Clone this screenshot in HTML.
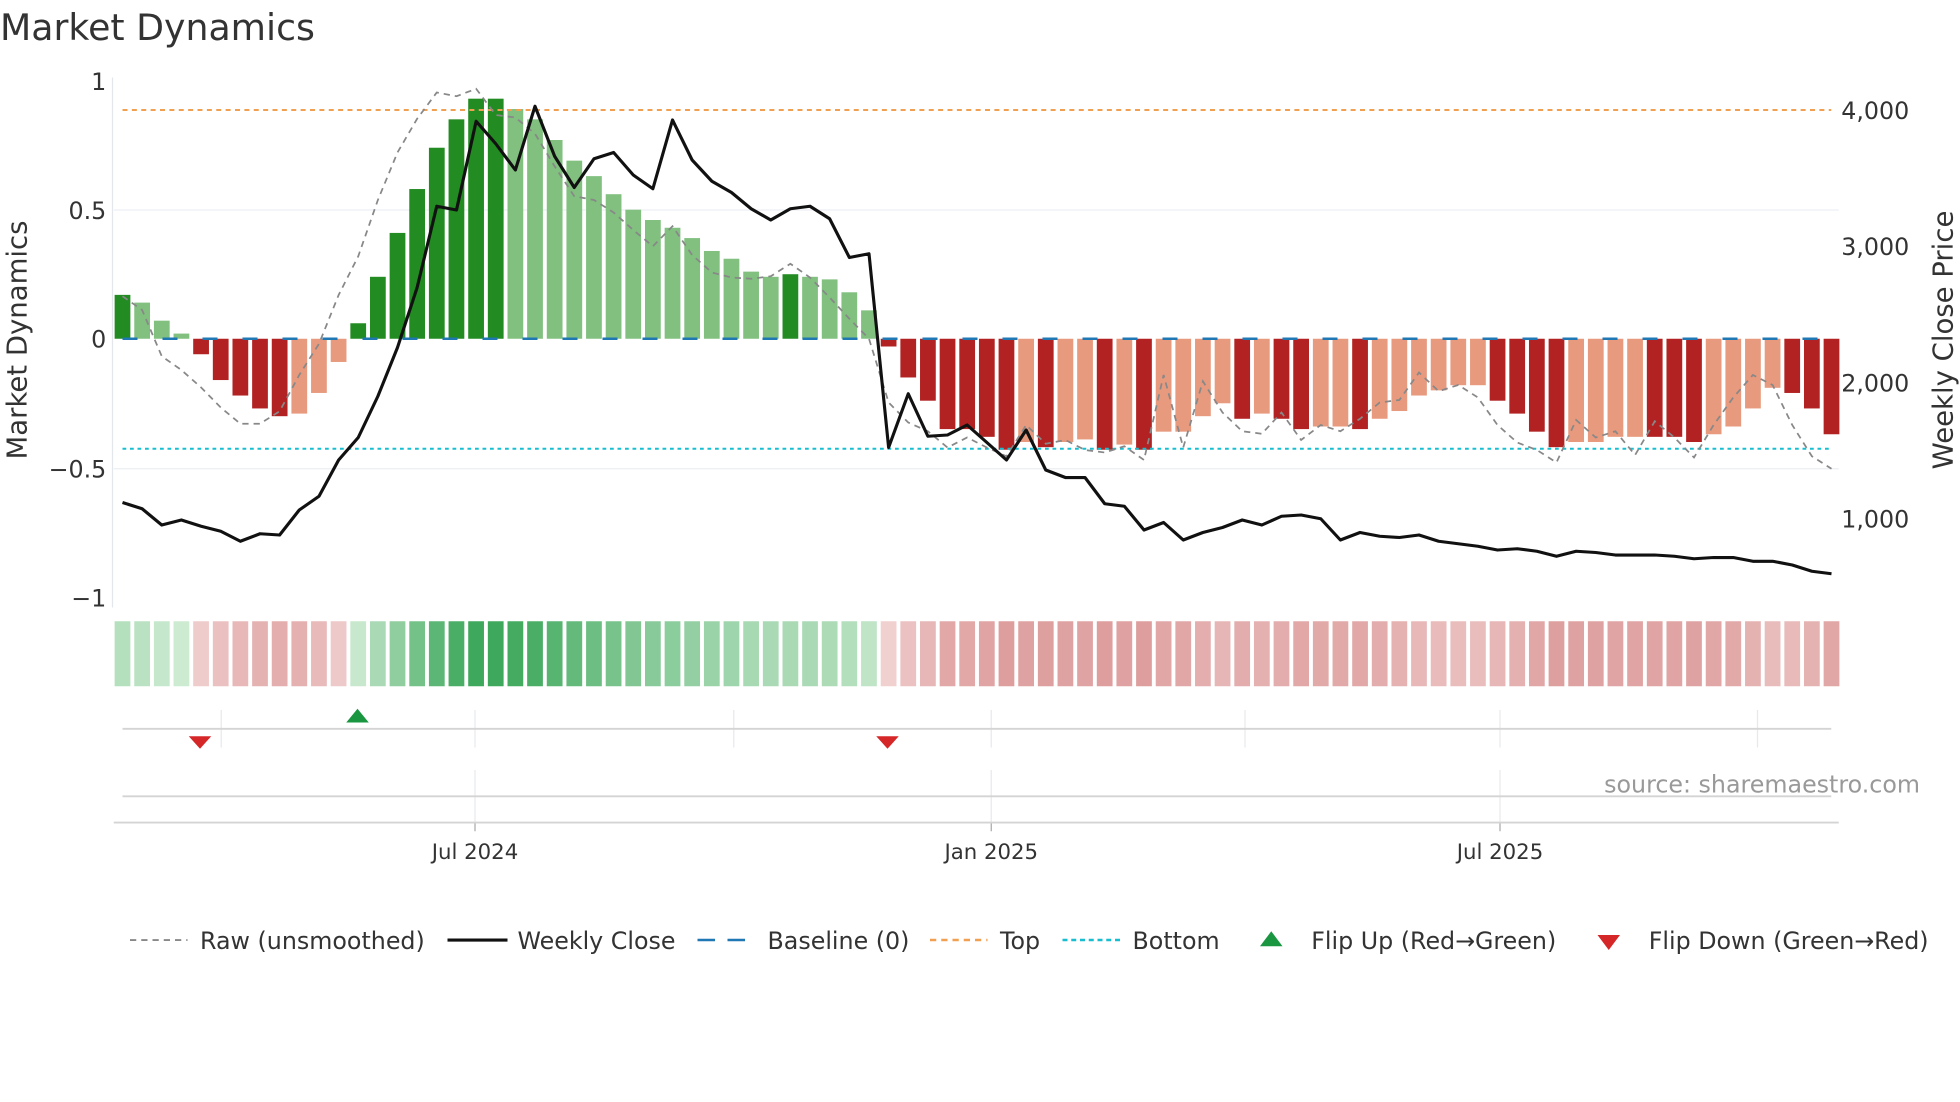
<!DOCTYPE html>
<html><head><meta charset="utf-8"><style>
html,body{margin:0;padding:0;background:#fff;}
svg{display:block;font-family:"DejaVu Sans","Liberation Sans",sans-serif;}
</style></head><body>
<svg id="s" width="1960" height="1102" viewBox="0 0 1568 881.6" xmlns="http://www.w3.org/2000/svg">
<rect width="1568" height="882" fill="#fff"/>
<text x="0" y="32" font-size="29" fill="#333">Market Dynamics</text>
<g id="grid"></g>
<g id="bars"></g>
<g id="lines"></g>
<g font-size="19" fill="#333">
<text x="85" y="72" text-anchor="end">1</text>
<text x="85" y="175" text-anchor="end">0.5</text>
<text x="85" y="278" text-anchor="end">0</text>
<text x="85" y="382" text-anchor="end">−0.5</text>
<text x="85" y="485" text-anchor="end">−1</text>
<text x="1473" y="95">4,000</text>
<text x="1473" y="204">3,000</text>
<text x="1473" y="313">2,000</text>
<text x="1473" y="422">1,000</text>
<text x="380" y="687" text-anchor="middle" font-size="17">Jul 2024</text>
<text x="793" y="687" text-anchor="middle" font-size="17">Jan 2025</text>
<text x="1200" y="687" text-anchor="middle" font-size="17">Jul 2025</text>
</g>
<text transform="translate(21,272) rotate(-90)" font-size="22" fill="#333" text-anchor="middle">Market Dynamics</text>
<text transform="translate(1562,272) rotate(-90)" font-size="22" fill="#333" text-anchor="middle">Weekly Close Price</text>
<text x="1536" y="634" text-anchor="end" font-size="19" fill="#999">source: sharemaestro.com</text>
<g font-size="19" fill="#333">
<line x1="104" y1="752" x2="150" y2="752" stroke="#888" stroke-width="1.5" stroke-dasharray="5,4"/>
<text x="160" y="759">Raw (unsmoothed)</text>
<line x1="358" y1="752" x2="406" y2="752" stroke="#111" stroke-width="2.5"/>
<text x="414" y="759">Weekly Close</text>
<line x1="558" y1="752" x2="604" y2="752" stroke="#1f77b4" stroke-width="2" stroke-dasharray="14,10"/>
<text x="614" y="759">Baseline (0)</text>
<line x1="744" y1="752" x2="790" y2="752" stroke="#f0a050" stroke-width="2" stroke-dasharray="5,4"/>
<text x="800" y="759">Top</text>
<line x1="850" y1="752" x2="896" y2="752" stroke="#17becf" stroke-width="2" stroke-dasharray="4,3"/>
<text x="906" y="759">Bottom</text>
<polygon points="1008,757 1026,757 1017,745" fill="#1a9641"/>
<text x="1049" y="759">Flip Up (Red→Green)</text>
<polygon points="1278,748 1296,748 1287,760" fill="#d62728"/>
<text x="1319" y="759">Flip Down (Green→Red)</text>
</g>
</svg>
<script>
var NS="http://www.w3.org/2000/svg";
function el(t,a,p){var e=document.createElementNS(NS,t);for(var k in a)e.setAttribute(k,a[k]);document.getElementById(p).appendChild(e);return e;}
var B=[[.17,1],[.14,0],[.07,0],[.02,0],[-.06,1],[-.16,1],[-.22,1],[-.27,1],[-.30,1],[-.29,0],[-.21,0],[-.09,0],[.06,1],[.24,1],[.41,1],[.58,1],[.74,1],[.85,1],[.93,1],[.93,1],[.89,0],[.85,0],[.77,0],[.69,0],[.63,0],[.56,0],[.50,0],[.46,0],[.43,0],[.39,0],[.34,0],[.31,0],[.26,0],[.24,0],[.25,1],[.24,0],[.23,0],[.18,0],[.11,0],[-.03,1],[-.15,1],[-.24,1],[-.35,1],[-.35,1],[-.38,1],[-.43,1],[-.40,0],[-.42,1],[-.40,0],[-.39,0],[-.43,1],[-.41,0],[-.43,1],[-.36,0],[-.36,0],[-.30,0],[-.25,0],[-.31,1],[-.29,0],[-.31,1],[-.35,1],[-.34,0],[-.34,0],[-.35,1],[-.31,0],[-.28,0],[-.22,0],[-.20,0],[-.18,0],[-.18,0],[-.24,1],[-.29,1],[-.36,1],[-.42,1],[-.40,0],[-.40,0],[-.38,0],[-.38,0],[-.38,1],[-.38,1],[-.40,1],[-.37,0],[-.34,0],[-.27,0],[-.19,0],[-.21,1],[-.27,1],[-.37,1]];
var P=[402,407,420,416,421,425,433,427,428,408,397,368,350,317,278,230,165,168,97,115,136,85,125,150,127,122,140,151,96,128,145,154,167,176,167,165,175,206,203,358,315,349,348,340,354,368,344,376,382,382,403,405,424,418,432,426,422,416,420,413,412,415,432,426,429,430,428,433,435,437,440,439,441,445,441,442,444,444,444,445,447,446,446,449,449,452,457,459];
var R=[237,248,285,296,310,326,339,339,329,300,275,236,205,160,122,95,74,77,71,92,94,107,133,157,160,170,184,197,181,204,218,222,223,221,211,222,238,255,271,322,338,345,358,350,358,365,340,355,352,360,362,357,368,300,358,305,330,345,347,330,352,340,345,335,322,320,298,313,308,318,340,354,360,370,336,350,345,364,337,350,366,340,318,300,308,340,365,375];
function X(i){return 98+15.715*i;}
var Y0=271,U=206.5;
el("line",{x1:91,y1:168,x2:1471,y2:168,stroke:"#eceff3","stroke-width":1},"grid");
el("line",{x1:91,y1:375,x2:1471,y2:375,stroke:"#eceff3","stroke-width":1},"grid");
el("line",{x1:90,y1:62,x2:90,y2:486,stroke:"#e3e6ea","stroke-width":1},"grid");
[177,380,587,793,996,1200,1406].forEach(function(x){el("line",{x1:x,y1:568,x2:x,y2:598,stroke:"#e6e9ee","stroke-width":1},"grid");});
[380,793,1200].forEach(function(x){el("line",{x1:x,y1:616,x2:x,y2:658,stroke:"#e6e9ee","stroke-width":1},"grid");el("line",{x1:x,y1:658,x2:x,y2:665,stroke:"#aaa","stroke-width":1},"grid");});
el("line",{x1:98,y1:583,x2:1465,y2:583,stroke:"#d4d4d4","stroke-width":1.5},"grid");
el("line",{x1:98,y1:637,x2:1465,y2:637,stroke:"#d4d4d4","stroke-width":1.5},"grid");
el("line",{x1:91,y1:658,x2:1471,y2:658,stroke:"#d4d4d4","stroke-width":1.5},"grid");
function mix(a,b,t){return "rgb("+a.map(function(v,k){return Math.round(v+(b[k]-v)*t);}).join(",")+")";}
B.forEach(function(b,i){
 var v=b[0],x=X(i)-6.3,y=v>0?Y0-v*U:Y0,h=Math.abs(v)*U;
 var c=v>0?(b[1]?"#228b22":"#81c07f"):(b[1]?"#b22222":"#e89a7e");
 el("rect",{x:x,y:y,width:12.6,height:h,fill:c},"bars");
 var t=Math.min(1,Math.abs(v)/0.93);
 var hc=v>0?mix([208,236,212],[62,168,92],t):mix([242,212,212],[222,158,158],Math.min(1,Math.abs(v)/0.43));
 el("rect",{x:x,y:497,width:12.6,height:52,fill:hc},"bars");
});
el("line",{x1:98,y1:88,x2:1465,y2:88,stroke:"#f0a050","stroke-width":1.6,"stroke-dasharray":"4,3.5"},"lines");
el("line",{x1:98,y1:359,x2:1465,y2:359,stroke:"#17becf","stroke-width":1.6,"stroke-dasharray":"3,3"},"lines");
el("line",{x1:98,y1:271,x2:1465,y2:271,stroke:"#1f77b4","stroke-width":2,"stroke-dasharray":"12,20"},"lines");
function pts(a){return a.map(function(y,i){return X(i).toFixed(1)+","+y;}).join(" ");}
el("polyline",{points:pts(R),fill:"none",stroke:"#888","stroke-width":1.4,"stroke-dasharray":"5,4"},"lines");
el("polyline",{points:pts(P),fill:"none",stroke:"#111","stroke-width":2.5,"stroke-linejoin":"round"},"lines");
el("polygon",{points:"151,589 169,589 160,599",fill:"#d62728"},"lines");
el("polygon",{points:"701,589 719,589 710,599",fill:"#d62728"},"lines");
el("polygon",{points:"277,578 295,578 286,567",fill:"#1a9641"},"lines");
</script>
</body></html>
